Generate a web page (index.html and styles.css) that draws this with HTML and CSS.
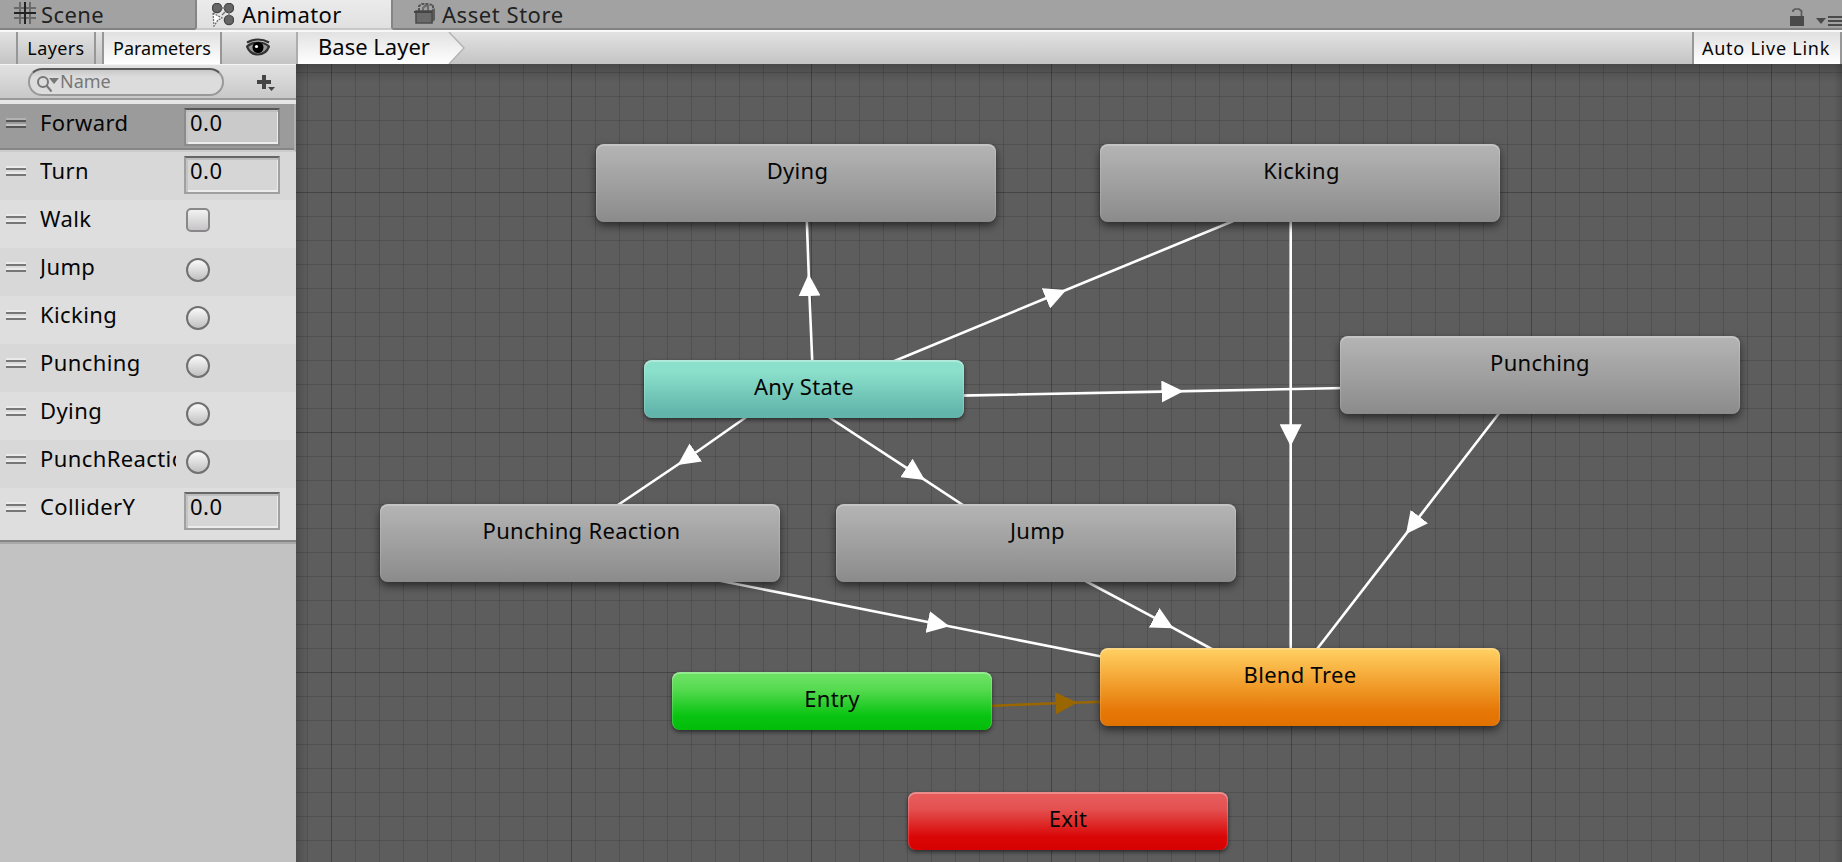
FILE: index.html
```
<!DOCTYPE html>
<html lang="en">
<head>
<meta charset="utf-8">
<title>Animator</title>
<link rel="stylesheet" href="styles.css">
</head>
<body>
<div class="window">
  <header class="tabs">
    <div class="tab tab-scene">
      <svg class="tab-icon" width="22" height="22" viewBox="0 0 22 22"><path d="M6 0v22M16 0v22M0 6h22M0 16h22" stroke="#6a6a6a" stroke-width="2" fill="none"/><path d="M11 0v22M0 11h22" stroke="#222" stroke-width="2" fill="none"/></svg>
      <span>Scene</span>
    </div>
    <div class="tab tab-animator active">
      <svg class="tab-icon" width="22" height="24" viewBox="0 0 22 24"><g fill="#666" stroke="#464646" stroke-width="1.4"><circle cx="5" cy="5" r="4.6"/><circle cx="17" cy="5" r="4.600"/><circle cx="17" cy="17" r="4.600"/></g><path d="M9 5h4M17 9v4M13 9l-3 3" stroke="#777" stroke-width="1.500" fill="none"/><path d="M1 10l9 5-4 2-4 6z" fill="#fff" stroke="#666" stroke-width="1.200" stroke-dasharray="2 1"/></svg>
      <span>Animator</span>
    </div>
    <div class="tab tab-store">
      <svg class="tab-icon" width="22" height="22" viewBox="0 0 22 22"><path d="M5 9V4l3-2h5l6 1v6" fill="none" stroke="#555" stroke-width="2" stroke-dasharray="3 1"/><path d="M9 9V6l2-2h3v5" fill="none" stroke="#6c6c6c" stroke-width="2"/><path d="M17 9l4-3v12l-4 3z" fill="#5c5c5c"/><path d="M2 9h16v12H2z" fill="#6a6a6a" stroke="#4c4c4c" stroke-width="1.600"/><path d="M0 10h18" stroke="#444" stroke-width="2"/></svg>
      <span>Asset Store</span>
    </div>
    <svg class="window-controls" width="54" height="22" viewBox="0 0 54 22"><path d="M0 8h14v10H0z" fill="#4a4a4a"/><path d="M3 4V2.500L5 1h4l2.500 2v5" fill="none" stroke="#5a5a5a" stroke-width="1.700" /><path d="M26 10h10l-5 6z" fill="#4a4a4a"/><path d="M38 9h16M38 13h16M38 17h16" stroke="#4a4a4a" stroke-width="2"/></svg>
  </header>
  <div class="toolbar">
    <div class="toolbar-left">
      <div class="tool-button layers">Layers</div>
      <div class="tool-button parameters">Parameters</div>
      <svg class="eye" width="24" height="20" viewBox="0 0 24 20"><path d="M1 4.500Q6 1.500 12 1.500T23 4.500" fill="none" stroke="#333" stroke-width="2.200"/><path d="M1 8.500Q5 4.500 12 4.500T23 8.500Q20 16.500 12 16.500T1 8.500z" fill="#999" stroke="#333" stroke-width="2.200"/><circle cx="12" cy="9.500" r="5.500" fill="#000"/><circle cx="10.500" cy="8.500" r="1.600" fill="#fff"/></svg>
    </div>
    <div class="breadcrumb">
      <span class="crumb">Base Layer</span>
      <svg class="crumb-tip" width="18" height="32" viewBox="0 0 18 32"><path d="M0 0h1l15 16L1 32H0z" fill="url(#crumbFill)"/><path d="M1 0l15 16L1 32" fill="none" stroke="#b4b4b4" stroke-width="1.500"/><defs><linearGradient id="crumbFill" x2="0" y2="1"><stop stop-color="#e2e2e2"/><stop offset="1" stop-color="#fff"/></linearGradient></defs></svg>
    </div>
    <div class="live-link">Auto Live Link</div>
  </div>
  <main class="content">
    <aside class="sidebar">
      <div class="search-row">
        <div class="search">
          <svg width="24" height="18" viewBox="0 0 24 18"><circle cx="7" cy="7" r="5" fill="none" stroke="#777" stroke-width="2"/><path d="M10.500 10.500l5 6" stroke="#777" stroke-width="2"/><path d="M13 3h10l-5 6z" fill="#777"/></svg>
          <span>Name</span>
        </div>
        <svg class="add" width="20" height="18" viewBox="0 0 20 18"><path d="M8 1v14M1 8h14" stroke="#444" stroke-width="4"/><path d="M12 13h7l-3.500 4z" fill="#444"/></svg>
      </div>
      <div class="params">
        <div class="param selected"><i class="grip"></i><span class="param-name">Forward</span><span class="field">0.0</span></div>
        <div class="param"><i class="grip"></i><span class="param-name">Turn</span><span class="field">0.0</span></div>
        <div class="param alt"><i class="grip"></i><span class="param-name">Walk</span><span class="check"></span></div>
        <div class="param"><i class="grip"></i><span class="param-name">Jump</span><span class="trigger"></span></div>
        <div class="param alt"><i class="grip"></i><span class="param-name">Kicking</span><span class="trigger"></span></div>
        <div class="param"><i class="grip"></i><span class="param-name">Punching</span><span class="trigger"></span></div>
        <div class="param alt"><i class="grip"></i><span class="param-name">Dying</span><span class="trigger"></span></div>
        <div class="param"><i class="grip"></i><span class="param-name">PunchReaction</span><span class="trigger"></span></div>
        <div class="param alt last"><i class="grip"></i><span class="param-name">ColliderY</span><span class="field">0.0</span></div>
      </div>
    </aside>
    <section class="graph">
      <svg class="edges" width="1546" height="798" viewBox="296 64 1546 798">
        <defs>
          <marker id="arrow" viewBox="0 0 22 22" refX="0" refY="11" markerWidth="22" markerHeight="22" markerUnits="userSpaceOnUse" orient="auto"><path d="M0 0l22 11L0 22z" fill="#fff"/></marker>
          <marker id="arrowEntry" viewBox="0 0 22 22" refX="0" refY="11" markerWidth="22" markerHeight="22" markerUnits="userSpaceOnUse" orient="auto"><path d="M0 0l22 11L0 22z" fill="#960"/></marker>
        </defs>
        <g class="edge">
          <polyline points="812.400,365 809.500,296 806.700,217"/>
          <polyline points="886,364.500 1045.900,298.300 1243,217"/>
          <polyline points="960,395.600 1161.500,391.600 1345,388"/>
          <polyline points="1290.700,217 1290.700,424.300 1290.700,653"/>
          <polyline points="1502.300,409 1419.400,516.600 1314,653"/>
          <polyline points="752,413 695.800,452.500 612,509"/>
          <polyline points="822.500,413 906.500,467.900 969,509"/>
          <polyline points="701,577 927.800,622 1105,657.300"/>
          <polyline points="1078,577 1154.200,617.700 1219,653"/>
        </g>
        <polyline class="edge-entry" points="988,706 1055.500,703.300 1105,701.800"/>
      </svg>
      <div class="node state dying">Dying</div>
      <div class="node state kicking">Kicking</div>
      <div class="node short any">Any State</div>
      <div class="node state punching">Punching</div>
      <div class="node state reaction">Punching Reaction</div>
      <div class="node state jump">Jump</div>
      <div class="node state blend">Blend Tree</div>
      <div class="node short entry">Entry</div>
      <div class="node short exit">Exit</div>
    </section>
  </main>
</div>
</body>
</html>
```
FILE: styles.css
```
* { box-sizing: border-box; }
body { margin: 0; font-family: "Noto Sans", "Open Sans", sans-serif; font-size: 22px; letter-spacing: 0.4px; color: #060606; }
svg { display: block; flex: none; }
.window { width: 1842px; height: 862px; display: flex; flex-direction: column; overflow: hidden; }

.tabs { height: 30px; display: flex; background: #a2a2a2; border-bottom: 2px solid #828282; flex: none; }
.tab { display: flex; height: 28px; line-height: 28px; color: #222; white-space: nowrap; }
.tab-icon { margin: 2px 6px 0 0; }
.tab-scene { width: 195px; padding-left: 14px; }
.tab-scene span { margin-left: -1px; }
.tab-animator { width: 198px; padding-left: 15px; }
.tab-animator .tab-icon { margin: 3px 8px 0 0; }
.tab-store { padding-left: 21px; letter-spacing: 0.55px; }
.active { background: linear-gradient(#ebebeb, #e0e0e0); border-left: 2px solid #858585; border-right: 2px solid #858585; color: #060606; height: 30px; border-bottom: 2px solid #c8c8c8; }
.window-controls { margin: 8px -2px 0 auto; }

.toolbar { height: 34px; flex: none; display: flex; border-top: 2px solid #f8f8f8; background: linear-gradient(#e2e2e2, #c4c4c4); }
.toolbar-left { width: 298px; display: flex; border-right: 2px solid #adadad; padding-left: 16px; font-size: 18px; line-height: 32px; }
.tool-button { border-left: 2px solid #979797; border-right: 2px solid #979797; text-align: center; }
.layers { width: 80px; }
.parameters { width: 120px; margin-left: 6px; background: linear-gradient(#e0e0e0, #fff); letter-spacing: 0; }
.eye { margin: 6px 0 0 24px; }
.breadcrumb { display: flex; line-height: 29px; letter-spacing: 0; }
.crumb { width: 150px; padding-left: 20px; background: linear-gradient(#e2e2e2, #fff); white-space: nowrap; }
.live-link { margin-left: auto; width: 150px; padding-right: 2px; border-left: 2px solid #979797; border-right: 2px solid #979797; background: linear-gradient(#e0e0e0, #fff); font-size: 18px; line-height: 32px; text-align: center; letter-spacing: 0.75px; white-space: nowrap; }

.content { flex: 1; display: flex; min-height: 0; }
.sidebar { width: 296px; background: #c2c2c2; flex: none; }
.search-row { height: 36px; display: flex; align-items: flex-start; padding: 3px 0 0 28px; background: linear-gradient(#e2e2e2, #c8c8c8); border-bottom: 2px solid #999; border-top: 1px solid #f4f4f4; }
.search { width: 196px; height: 28px; border: 2px solid #999; border-top-color: #5a5a5a; border-radius: 14px; background: linear-gradient(#c8c8c8, #dcdcdc 30%); display: flex; padding-left: 6px; color: #777; font-size: 18px; line-height: 22px; letter-spacing: 0; }
.search svg { margin: 5px 0 0 0; }
.add { margin: 6px 0 0 32px; }
.params { border-top: 4px solid #e6e6e6; }
.param { height: 48px; display: flex; background: #d8d8d8; line-height: 36px; }
.alt { background: #dedede; }
.selected { background: #9b9b9b; border-bottom: 2px solid #ccc; border-right: 2px solid #b0b0b0; box-shadow: inset 0 -2px #868686; }
.last { height: 54px; border-bottom: 2px solid #858585; box-shadow: 0 2px #a8a8a8; }
.grip { width: 20px; height: 10px; margin: 14px 14px 0 6px; border-top: 2px solid #eaeaea; background: linear-gradient(#777 2px, #dcdcdc 2px 4px, #eaeaea 4px 6px, #777 6px); flex: none; }
.selected .grip { border-top-color: #b2b2b2; background: linear-gradient(#555 2px, #9b9b9b 2px 4px, #c4c4c4 4px 6px, #555 6px); }
.param-name { width: 136px; overflow: hidden; white-space: nowrap; flex: none; }
.field { width: 96px; height: 38px; margin: 4px 0 0 8px; border: 2px solid #a0a0a0; border-top-color: #666; padding-left: 4px; line-height: 24px; background: #d6d6d6; box-shadow: inset 0 2px #bebebe, inset 2px 0 #c4c4c4, inset -1px -2px #ececec; letter-spacing: 0.5px; }
.selected .field { background: #cacaca; border-color: #8b8b8b; border-top-color: #555; }
.check { width: 24px; height: 24px; margin: 8px 0 0 10px; border: 2px solid #888; border-radius: 5px; background: linear-gradient(#f2f2f2, #c6c4c6); }
.trigger { width: 24px; height: 24px; margin: 10px 0 0 10px; border: 2px solid #707070; border-radius: 50%; background: linear-gradient(#fafafa, #c0c0c0); }

.graph { position: relative; flex: 1; overflow: hidden; background-color: #5d5d5d;
  background-image: linear-gradient(rgba(0,0,0,.22), transparent 18px), linear-gradient(90deg, rgba(0,0,0,.16), transparent 12px), linear-gradient(270deg, rgba(0,0,0,.14), transparent 8px),
    linear-gradient(rgba(0,0,0,.16) 1px, transparent 1px), linear-gradient(90deg, rgba(0,0,0,.16) 1px, transparent 1px), linear-gradient(rgba(0,0,0,.13) 1px, transparent 1px), linear-gradient(90deg, rgba(0,0,0,.13) 1px, transparent 1px);
  background-size: auto, auto, auto, 240px 240px, 240px 240px, 24px 24px, 24px 24px;
  background-position: 0 0, 0 0, 0 0, 0 128px, 35px 0, 0 8px, 11px 0; }
.edges { position: absolute; left: 0; top: 0; }
.edge polyline, .edge-entry { fill: none; stroke: #fff; stroke-width: 2.6; marker-mid: url(#arrow); }
.edge-entry { stroke: #960; marker-mid: url(#arrowEntry); }
.node { position: absolute; border-radius: 8px; text-align: center; line-height: 52px; white-space: nowrap; letter-spacing: 0.3px; }
.state { width: 400px; height: 78px; padding-left: 3px; background: linear-gradient(#b5b5b5, #8b8b8b); box-shadow: inset 0 2px rgba(255,255,255,.22), inset 2px 0 1px -1px rgba(255,255,255,.15), inset -2px 0 1px -1px rgba(255,255,255,.15), 0 4px 9px rgba(0,0,0,.55); }
.short { width: 320px; height: 58px; box-shadow: inset 0 2px rgba(255,255,255,.3), inset 2px 0 1px -1px rgba(255,255,255,.2), inset -2px 0 1px -1px rgba(255,255,255,.2), 0 2px 4px rgba(0,0,0,.55); }
.dying { left: 300px; top: 80px; }
.kicking { left: 804px; top: 80px; }
.any { left: 348px; top: 296px; background: linear-gradient(#8be0cb 20%, #62b5ab 90%); }
.punching { left: 1044px; top: 272px; padding-left: 0; }
.reaction { left: 84px; top: 440px; }
.jump { left: 540px; top: 440px; }
.blend { left: 804px; top: 584px; padding-left: 0; background: linear-gradient(#ffcc5e 5%, #f09a28 50%, #e67808 80%, #e27200); }
.entry { left: 376px; top: 608px; background: linear-gradient(#68e060 10%, #56da50 30%, #08c410 76%, #02bd08); }
.exit { left: 612px; top: 728px; background: linear-gradient(#e65a5a 10%, #e45050 30%, #da0808 76%, #d60000); }
```
